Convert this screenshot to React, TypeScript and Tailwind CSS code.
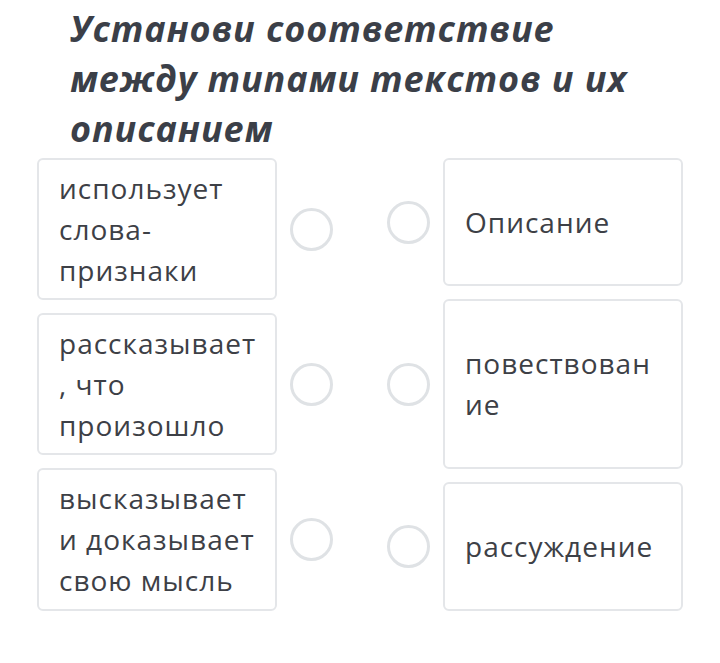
const left = [
  { lines: ["использует", "слова-", "признаки"], h: "h-[142px]" },
  { lines: ["рассказывает", ", что", "произошло"], h: "h-[142px]" },
  { lines: ["высказывает", "и доказывает", "свою мысль"], h: "h-[143px]" },
];

const right = [
  { lines: ["Описание"], h: "h-[128px]" },
  { lines: ["повествован", "ие"], h: "h-[170px]" },
  { lines: ["рассуждение"], h: "h-[129px]" },
];

function Circle() {
  return <div className="w-[43px] h-[43px] shrink-0 rounded-full border-[3px] border-[#dfe2e5] bg-white" />;
}

function Card({ lines, h }: { lines: string[]; h: string }) {
  return (
    <div className={"w-[240px] shrink-0 rounded-md border-2 border-[#e4e6e9] bg-white pl-[20px] pr-[10px] flex flex-col justify-center " + h}>
      {lines.map((l) => (
        <span key={l} className="block whitespace-nowrap text-[28px] leading-[41px] tracking-[1px] text-[#3d4046]">
          {l}
        </span>
      ))}
    </div>
  );
}

export default function App() {
  return (
    <div className="w-[720px] h-[663px] bg-white overflow-hidden" style={{ fontFamily: '"Open Sans", sans-serif' }}>
      <h1 className="pl-[70px] pt-[4px] text-[36px] leading-[50px] font-bold italic tracking-[0.9px] text-[#3b3f48]">
        Установи соответствие
        <br />
        между типами текстов и их
        <br />
        описанием
      </h1>
      <div className="flex flex-row pl-[37px] pt-[4px] gap-[54px]">
        <div className="flex flex-col gap-[13px]">
          {left.map((c, i) => (
            <div key={i} className="flex flex-row items-center gap-[13px]">
              <Card lines={c.lines} h={c.h} />
              <Circle />
            </div>
          ))}
        </div>
        <div className="flex flex-col gap-[13px]">
          {right.map((c, i) => (
            <div key={i} className="flex flex-row items-center gap-[13px]">
              <Circle />
              <Card lines={c.lines} h={c.h} />
            </div>
          ))}
        </div>
      </div>
    </div>
  );
}
